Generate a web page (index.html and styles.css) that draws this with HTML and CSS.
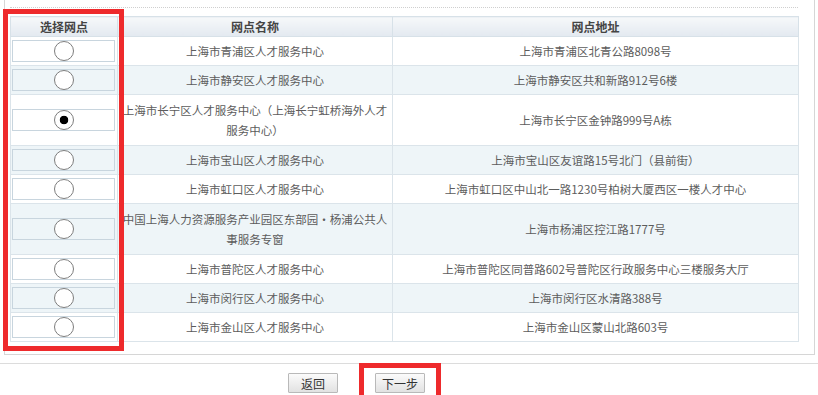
FILE: index.html
```html
<!DOCTYPE html>
<html lang="zh-CN">
<head>
<meta charset="UTF-8">
<title>选择网点</title>
<link rel="stylesheet" href="styles.css">
</head>
<body>
<div class="page">
    <div class="panel">
        <div class="tip">
            <div class="tip-line">
                <span class="tip-mark">■</span>
                <span class="tip-red">请选择需要办理业务的网点</span>
                <span class="tip-gray">（单选）</span>
            </div>
        </div>
        <table class="grid">
            <colgroup>
                <col class="col-pick">
                <col class="col-name">
                <col class="col-addr">
            </colgroup>
            <thead>
                <tr>
                    <th>选择网点</th>
                    <th>网点名称</th>
                    <th>网点地址</th>
                </tr>
            </thead>
            <tbody>
                <tr>
                    <td><div class="pick"><input type="radio" name="site" value="1"></div></td>
                    <td>上海市青浦区人才服务中心</td>
                    <td>上海市青浦区北青公路8098号</td>
                </tr>
                <tr class="alt">
                    <td><div class="pick"><input type="radio" name="site" value="2"></div></td>
                    <td>上海市静安区人才服务中心</td>
                    <td>上海市静安区共和新路912号6楼</td>
                </tr>
                <tr class="tall">
                    <td><div class="pick"><input type="radio" name="site" value="3" checked></div></td>
                    <td>上海市长宁区人才服务中心（上海长宁虹桥海外人才服务中心）</td>
                    <td>上海市长宁区金钟路999号A栋</td>
                </tr>
                <tr class="alt">
                    <td><div class="pick"><input type="radio" name="site" value="4"></div></td>
                    <td>上海市宝山区人才服务中心</td>
                    <td>上海市宝山区友谊路15号北门（县前街）</td>
                </tr>
                <tr>
                    <td><div class="pick"><input type="radio" name="site" value="5"></div></td>
                    <td>上海市虹口区人才服务中心</td>
                    <td>上海市虹口区中山北一路1230号柏树大厦西区一楼人才中心</td>
                </tr>
                <tr class="alt tall">
                    <td><div class="pick"><input type="radio" name="site" value="6"></div></td>
                    <td>中国上海人力资源服务产业园区东部园·杨浦公共人事服务专窗</td>
                    <td>上海市杨浦区控江路1777号</td>
                </tr>
                <tr>
                    <td><div class="pick"><input type="radio" name="site" value="7"></div></td>
                    <td>上海市普陀区人才服务中心</td>
                    <td>上海市普陀区同普路602号普陀区行政服务中心三楼服务大厅</td>
                </tr>
                <tr class="alt">
                    <td><div class="pick"><input type="radio" name="site" value="8"></div></td>
                    <td>上海市闵行区人才服务中心</td>
                    <td>上海市闵行区水清路388号</td>
                </tr>
                <tr>
                    <td><div class="pick"><input type="radio" name="site" value="9"></div></td>
                    <td>上海市金山区人才服务中心</td>
                    <td>上海市金山区蒙山北路603号</td>
                </tr>
            </tbody>
        </table>
    </div>

    <div class="actions">
        <button type="button" class="btn">返回</button>
        <button type="button" class="btn">下一步</button>
    </div>

    <div class="mark mark-list"></div>
    <div class="mark mark-next"></div>
</div>
</body>
</html>
```

FILE: styles.css
```css
body {
    margin: 0;
    background: #fff;
    font-family: "Noto Sans CJK SC", "Liberation Sans", sans-serif;
    font-size: 11.5px;
    color: #5c5c5c;
}

.page {
    position: relative;
    width: 818px;
    height: 395px;
    overflow: hidden;
}

.panel {
    box-sizing: border-box;
    width: 811px;
    margin-left: 4px;
    padding: 0 16px 12px 5px;
    border: 1px solid #d6d6d6;
    border-top: none;
}

.tip {
    height: 7px;
    overflow: hidden;
    border-bottom: 1px dotted #cfcfcf;
    font-size: 12px;
    line-height: 14px;
    white-space: nowrap;
}

.tip-line {
    margin-top: -13px;
}

.tip-mark {
    margin-left: 10px;
    color: #e8232a;
}

.tip-red {
    color: #b3262b;
}

.tip-gray {
    color: #999;
}

.grid {
    width: 788px;
    margin-top: 8px;
    table-layout: fixed;
    border-collapse: collapse;
    border: 1px solid #d7e1e8;
}

.col-pick { width: 107px; }
.col-name { width: 275px; }
.col-addr { width: 406px; }

.grid th {
    height: 19px;
    padding: 0;
    font-size: 12px;
    font-weight: bold;
    color: #444;
    background: linear-gradient(#f6f8fa, #e3e9f0);
    border: 1px solid #d7e1e8;
}

.grid td {
    height: 28px;
    padding: 0;
    text-align: center;
    line-height: 20px;
    border: 1px solid #dbe4ea;
}

.grid tr.tall td {
    height: 50px;
}

.grid tr.alt td {
    background: #eef5f8;
}

.pick {
    box-sizing: border-box;
    height: 22px;
    margin: 0 2px 0 1px;
    display: flex;
    align-items: center;
    justify-content: center;
    border: 1px solid #c8d5de;
}

.pick input {
    appearance: none;
    -webkit-appearance: none;
    box-sizing: border-box;
    width: 20px;
    height: 20px;
    margin: 0;
    border: 1px solid #7d7d7d;
    border-radius: 50%;
    background: #fff;
}

.pick input:checked {
    background: radial-gradient(circle, #000 0 4px, #fff 4.6px);
}

.actions {
    margin-top: 8px;
    padding: 9px 0 0 288px;
    display: flex;
    gap: 37px;
    border-top: 1px solid #dcdcdc;
}

.btn {
    box-sizing: border-box;
    width: 50px;
    height: 20px;
    padding: 0;
    font-family: inherit;
    font-size: 12px;
    color: #333;
    background: linear-gradient(#fbfbfb, #e2e2e2);
    border: 1px solid #b9b9b9;
    border-radius: 1px;
}

/* red annotation frames drawn over the page */
.mark {
    position: absolute;
    box-sizing: border-box;
    border: 5px solid #ee2a2c;
}

.mark-list {
    left: 3px;
    top: 9px;
    width: 121px;
    height: 342px;
}

.mark-next {
    left: 359px;
    top: 363px;
    width: 82px;
    height: 40px;
}
```
